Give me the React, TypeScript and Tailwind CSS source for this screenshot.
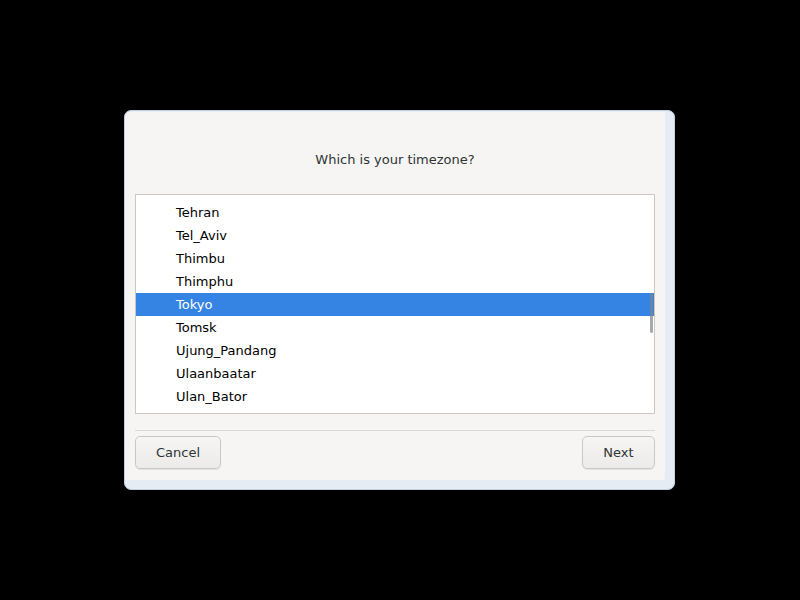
const zones = [
  "Tehran",
  "Tel_Aviv",
  "Thimbu",
  "Thimphu",
  "Tokyo",
  "Tomsk",
  "Ujung_Pandang",
  "Ulaanbaatar",
  "Ulan_Bator",
  "Urumqi",
];

export default function App() {
  return (
    <div className="w-[800px] h-[600px] bg-black flex items-start justify-center pt-[110px] font-['DejaVu_Sans',sans-serif]">
      <div className="w-[551px] h-[380px] ml-[-1px] rounded-[7px] border border-[#c5d0dd] bg-[#e6ecf3] pl-0 pt-[1px] pr-[9px] pb-[9px]">
        <div className="h-full rounded-tl-[6px] rounded-br-[3px] bg-[#f6f5f4] flex flex-col px-[10px]">
          <div className="h-[82px] flex items-center justify-center pt-[13px] text-[13px] text-[#2e3436]">
            Which is your timezone?
          </div>
          <div className="relative h-[220px] border border-[#cdc7c2] bg-white overflow-hidden">
            <div className="pt-[6px]">
              {zones.map((z) => (
                <div
                  key={z}
                  className={
                    z === "Tokyo"
                      ? "h-[23px] flex items-center pl-[40px] text-[13px] bg-[#3584e4] text-white"
                      : "h-[23px] flex items-center pl-[40px] text-[13px] text-black"
                  }
                >
                  {z}
                </div>
              ))}
            </div>
            <div className="absolute right-[1px] top-[98px] w-[3px] h-[40px] rounded-full bg-[#7e8587]/70" />
          </div>
          <div className="mt-[16px] border-t border-[#dcd9d5]" />
          <div className="mt-[5px] flex justify-between">
            <button className="w-[86px] h-[33px] rounded-[5px] border border-[#cdc7c2] bg-gradient-to-b from-[#f6f5f4] to-[#edebe9] shadow-[0_1px_0_rgba(0,0,0,0.07)] text-[13px] text-[#2e3436]">
              Cancel
            </button>
            <button className="w-[73px] h-[33px] rounded-[5px] border border-[#cdc7c2] bg-gradient-to-b from-[#f6f5f4] to-[#edebe9] shadow-[0_1px_0_rgba(0,0,0,0.07)] text-[13px] text-[#2e3436]">
              Next
            </button>
          </div>
        </div>
      </div>
    </div>
  );
}
